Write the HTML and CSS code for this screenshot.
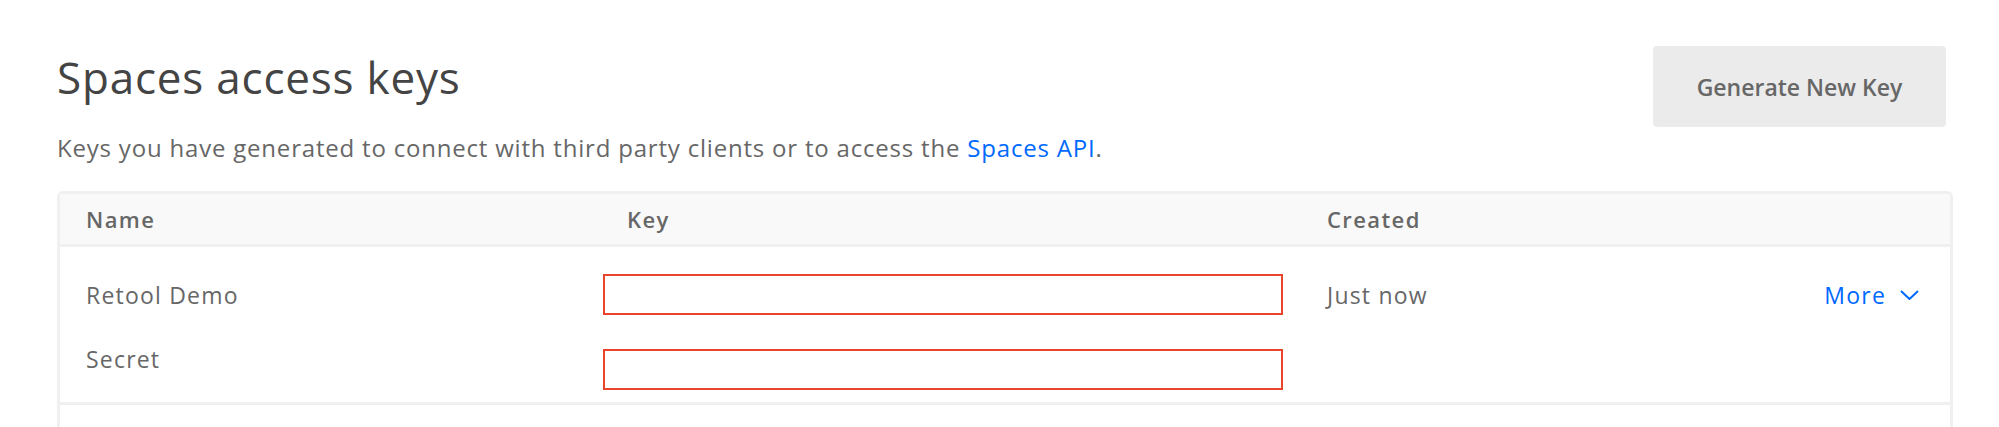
FILE: index.html
```html
<!DOCTYPE html>
<html lang="en">
<head>
<meta charset="utf-8">
<title>Spaces access keys</title>
<link rel="stylesheet" href="styles.css">
</head>
<body>
<main class="page">
  <header class="head">
    <div class="intro">
      <h1 class="title">Spaces access keys</h1>
      <p class="desc">Keys you have generated to connect with third party clients or to access the <a class="link" href="#">Spaces API</a>.</p>
    </div>
    <button class="btn" type="button">Generate New Key</button>
  </header>

  <section class="table">
    <div class="thead">
      <div class="th">Name</div>
      <div class="th th-key">Key</div>
      <div class="th">Created</div>
    </div>
    <div class="row">
      <div class="name">Retool Demo</div>
      <div class="keybox"></div>
      <div class="created">Just now</div>
      <a class="more" href="#">More
        <svg class="chev" width="19" height="10" viewBox="0 0 19 10" aria-hidden="true"><path d="M1 1 L9.5 9 L18 1" fill="none" stroke="currentColor" stroke-width="2"/></svg>
      </a>
      <div class="name secret">Secret</div>
      <div class="keybox"></div>
    </div>
    <div class="row empty"></div>
  </section>
</main>
</body>
</html>
```

FILE: styles.css
```css
* { box-sizing: border-box; }
html, body { margin: 0; padding: 0; background: #fff; }
body { font-family: "Open Sans", Lato, sans-serif; color: #676767; }

.page { padding: 0 46px 0 57px; }

.head {
  display: flex;
  justify-content: space-between;
  align-items: flex-start;
}
.title {
  margin: 50px 0 0;
  font-size: 44px;
  line-height: 54px;
  font-weight: 400;
  letter-spacing: 0.8px;
  color: #444;
}
.desc {
  margin: 29px 0 0;
  font-size: 24px;
  line-height: 30px;
  letter-spacing: 0.8px;
  color: #676767;
}
.link { color: #0069ff; text-decoration: none; }

.btn {
  margin: 46px 7px 0 0;
  width: 293px;
  height: 81px;
  border: 0;
  border-radius: 4px;
  background: #ebebeb;
  color: #676767;
  font-family: inherit;
  font-size: 23px;
  font-weight: 600;
  cursor: pointer;
}

.table {
  margin-top: 28px;
  border: 3px solid #f0f0f0;
  border-radius: 6px 6px 0 0;
  border-bottom: 0;
}
.thead, .row {
  display: grid;
  grid-template-columns: 517px 724px 1fr auto;
  padding: 0 31px 0 26px;
}
.thead {
  background: #f9f9f9;
  height: 53px;
  align-items: center;
  border-bottom: 3px solid #f0f0f0;
}
.th {
  font-size: 22px;
  font-weight: 600;
  letter-spacing: 1.4px;
  color: #676767;
}
.th-key { padding-left: 24px; }

.row {
  padding-top: 27px;
  padding-bottom: 12px;
  row-gap: 34px;
  border-bottom: 3px solid #f0f0f0;
  align-items: center;
  font-size: 23px;
  letter-spacing: 1.2px;
}
.keybox {
  width: 680px;
  height: 41px;
  border: 2px solid #e8452c;
}
.more {
  color: #0069ff;
  text-decoration: none;
  display: flex;
  align-items: center;
  gap: 14px;
}
.chev { display: block; }
.secret { align-self: start; margin-top: -6px; }
.row.empty { height: 30px; padding: 0; border-bottom: 0; }
```
